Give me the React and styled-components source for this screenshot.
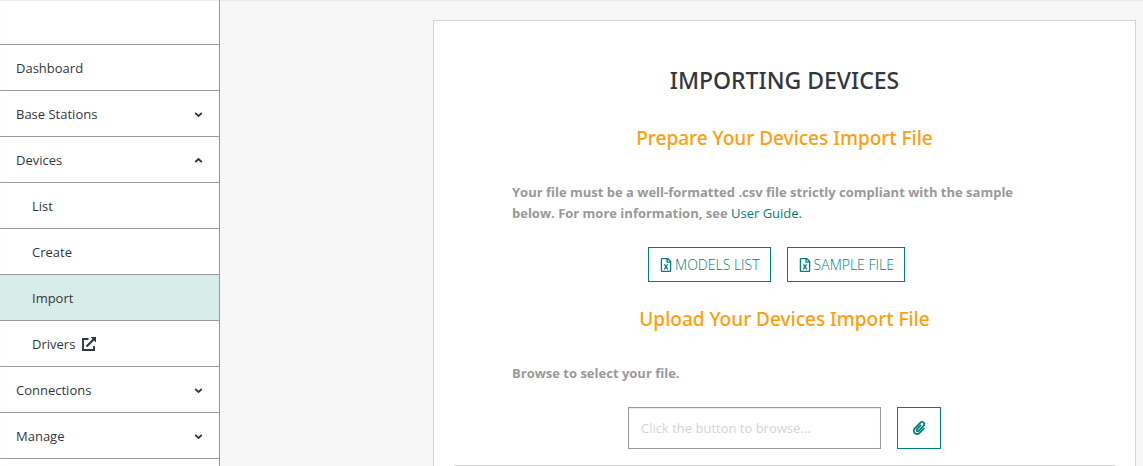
import React, { useState } from 'react';
import styled, { createGlobalStyle } from 'styled-components';
import { FaRegFileExcel, FaPaperclip } from 'react-icons/fa';

const GlobalStyle = createGlobalStyle`
  * {
    box-sizing: border-box;
  }

  body {
    margin: 0;
    background: #f7f7f7;
    color: #32373d;
    font-family: 'Open Sans', 'Noto Sans', sans-serif;
    font-size: 13px;
    line-height: 21px;
  }
`;

const Page = styled.div`
  display: flex;
  min-height: 100vh;
  box-shadow: inset 0 1px 1px #e9e9e9;
`;

const Sidebar = styled.nav`
  flex: 0 0 220px;
  padding-top: 44px;
  border-right: 1px solid #999;
  background: #fff;
  box-shadow: inset 0 1px 1px #e9e9e9;
`;

const Menu = styled.ul`
  margin: 0;
  padding: 0;
  list-style: none;
`;

const MenuItem = styled.li`
  border-top: 1px solid #999;

  &:last-child {
    border-bottom: ${({ $nested }) => ($nested ? 'none' : '1px solid #999')};
  }
`;

const MenuLink = styled.a`
  display: flex;
  align-items: center;
  gap: 7px;
  height: 45px;
  padding-top: 1px;
  padding-left: ${({ $nested }) => ($nested ? '32px' : '16px')};
  background: ${({ $active }) => ($active ? '#d8ecea' : 'transparent')};
  color: inherit;
  text-decoration: none;
`;

const MenuToggle = styled.button`
  display: flex;
  align-items: center;
  justify-content: space-between;
  width: 100%;
  height: 45px;
  padding: 1px 16px 0;
  border: 0;
  background: transparent;
  color: inherit;
  font: inherit;
  text-align: left;
  cursor: pointer;
`;

const Main = styled.main`
  flex: 1;
  min-width: 0;
  padding: 20px 7px 0 213px;
`;

const Card = styled.section`
  min-height: 100%;
  padding: 43px 20px 0;
  border: 1px solid #d5d5d5;
  border-bottom: 0;
  background: #fff;
`;

const Content = styled.div`
  margin: 0 58px;
`;

const Title = styled.h1`
  margin: 0 0 30px;
  font-family: 'Noto Sans', 'Open Sans', sans-serif;
  font-size: 23px;
  font-weight: 500;
  line-height: 32px;
  text-align: center;
  text-transform: uppercase;
`;

const Subtitle = styled.h2`
  margin: 0 0 32px;
  color: #ff9e0d;
  font-family: 'Noto Sans', 'Open Sans', sans-serif;
  font-size: 19px;
  font-weight: 500;
  line-height: 24px;
  text-align: center;
`;

const Text = styled.p`
  display: block;
  margin: 0 0 23px;
  color: #999;
  font-weight: 700;
`;

const GuideLink = styled.a`
  color: #007f78;
  font-weight: 400;
  text-decoration: none;
`;

const ButtonRow = styled.div`
  display: flex;
  justify-content: center;
  gap: 16px;
  margin-bottom: 25px;
  padding-right: 16px;
`;

const OutlineButton = styled.button`
  display: flex;
  align-items: center;
  justify-content: center;
  gap: 2px;
  height: 35px;
  padding: 0 10px;
  border: 1px solid #007f78;
  background: #fff;
  color: #007f78;
  font: inherit;
  font-size: 14px;
  font-weight: 300;
  text-transform: uppercase;
  cursor: pointer;
`;

const BrowseRow = styled.div`
  display: flex;
  justify-content: center;
  gap: 16px;
  margin-bottom: 16px;
`;

const FileInput = styled.input`
  width: 253px;
  height: 42px;
  padding: 0 12px;
  border: 1px solid #999;
  border-radius: 0;
  background: #fff;
  box-shadow: inset 0 1px 1px #ececec;
  color: inherit;
  font: inherit;

  &::placeholder {
    color: #d5d5d5;
    opacity: 1;
  }
`;

const BrowseButton = styled(OutlineButton)`
  width: 44px;
  height: 42px;
  padding: 0;
`;

const Divider = styled.hr`
  margin: 0;
  border: 0;
  border-top: 1px solid #d5d5d5;
`;

const Chevron = ({ open }) => (
  <svg width="9" height="9" viewBox="0 0 9 9" fill="none" stroke="currentColor" strokeWidth="1.7" aria-hidden="true">
    <path d={open ? 'M1.2 6 4.5 3 7.8 6' : 'M1.2 3 4.5 6 7.8 3'} />
  </svg>
);

const ExternalIcon = () => (
  <svg width="14" height="14" viewBox="0 0 14 14" fill="none" stroke="currentColor" strokeWidth="2" aria-hidden="true">
    <path d="M6.5 2H1v11h11V9" strokeWidth="1.9" />
    <path d="M4.5 9.5 12 2" strokeWidth="2.1" />
    <path d="M8.5 0H14v5.5z" fill="currentColor" stroke="none" />
  </svg>
);

const menu = [
  { label: 'Dashboard' },
  { label: 'Base Stations', items: [] },
  {
    label: 'Devices',
    items: [
      { label: 'List' },
      { label: 'Create' },
      { label: 'Import', active: true },
      { label: 'Drivers', external: true },
    ],
  },
  { label: 'Connections', items: [] },
  { label: 'Manage', items: [] },
];

const SideMenu = () => {
  const [openSection, setOpenSection] = useState('Devices');

  return (
    <Sidebar>
      <Menu>
        {menu.map(({ label, items }) => {
          const isOpen = openSection === label;

          return (
            <MenuItem key={label}>
              {items ? (
                <MenuToggle type="button" aria-expanded={isOpen} onClick={() => setOpenSection(isOpen ? null : label)}>
                  {label}
                  <Chevron open={isOpen} />
                </MenuToggle>
              ) : (
                <MenuLink href="#">{label}</MenuLink>
              )}
              {isOpen && (
                <Menu>
                  {items.map((item) => (
                    <MenuItem key={item.label} $nested>
                      <MenuLink href="#" $nested $active={item.active}>
                        {item.label}
                        {item.external && <ExternalIcon />}
                      </MenuLink>
                    </MenuItem>
                  ))}
                </Menu>
              )}
            </MenuItem>
          );
        })}
      </Menu>
    </Sidebar>
  );
};

const App = () => (
  <>
    <GlobalStyle />
    <Page>
      <SideMenu />
      <Main>
        <Card>
          <Content>
            <Title>Importing Devices</Title>
            <Subtitle>Prepare Your Devices Import File</Subtitle>
            <Text>
              Your file must be a well-formatted .csv file strictly compliant with the sample below. For more
              information, see <GuideLink href="#">User Guide.</GuideLink>
            </Text>
            <ButtonRow>
              <OutlineButton type="button">
                <FaRegFileExcel size={14} />
                Models list
              </OutlineButton>
              <OutlineButton type="button">
                <FaRegFileExcel size={14} />
                Sample file
              </OutlineButton>
            </ButtonRow>
            <Subtitle>Upload Your Devices Import File</Subtitle>
            <Text as="label" htmlFor="import-file">
              Browse to select your file.
            </Text>
            <BrowseRow>
              <FileInput id="import-file" type="text" placeholder="Click the button to browse..." readOnly />
              <BrowseButton type="button" aria-label="Browse">
                <FaPaperclip size={14} />
              </BrowseButton>
            </BrowseRow>
          </Content>
          <Divider />
        </Card>
      </Main>
    </Page>
  </>
);

export default App;
